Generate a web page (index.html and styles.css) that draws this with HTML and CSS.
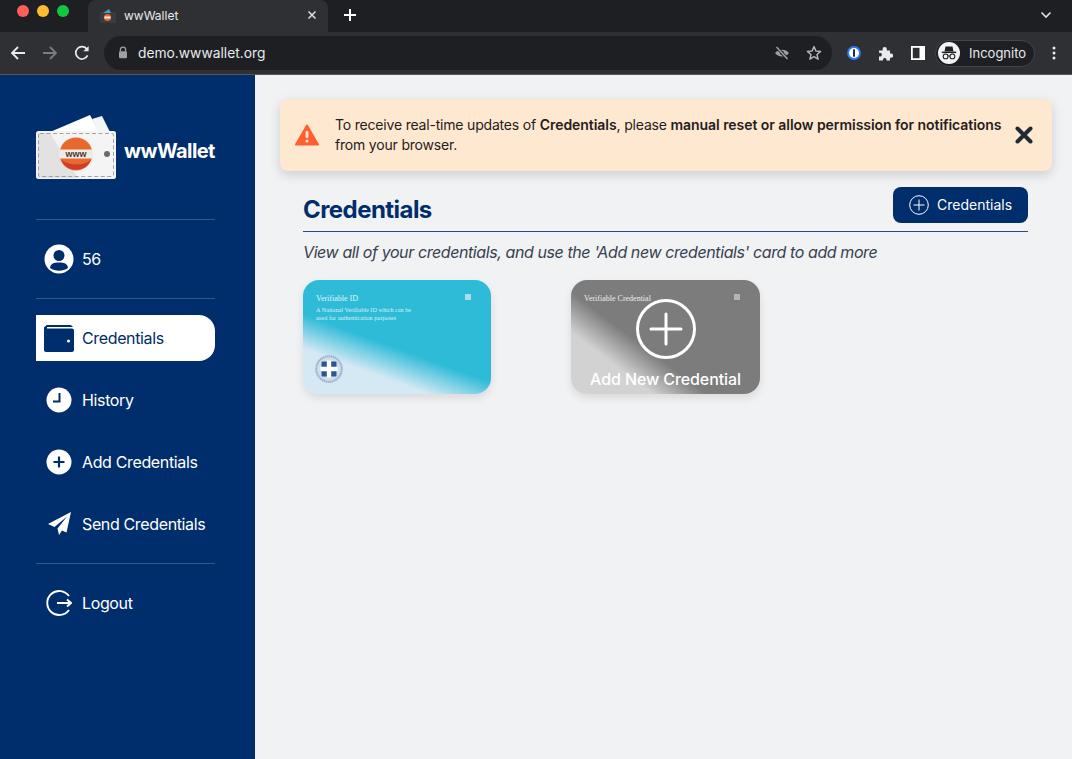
FILE: index.html
```html
<!DOCTYPE html>
<html lang="en">
<head>
    <meta charset="UTF-8">
    <meta name="viewport" content="width=device-width, initial-scale=1.0">
    <title>wwWallet</title>
    <link rel="stylesheet" href="styles.css">
</head>
<body>
    <div class="tabstrip">
        <div class="lights">
            <span class="light light-red"></span>
            <span class="light light-yellow"></span>
            <span class="light light-green"></span>
        </div>
        <div class="tab">
            <svg class="favicon" width="16" height="16" viewBox="0 0 16 16">
                <rect x="0" y="4" width="16" height="11" fill="#3a3b3f"/>
                <path d="M3 5 L9 1 L11 5 Z" fill="#3f9fc4"/>
                <circle cx="7.5" cy="9.5" r="3.6" fill="#e8642c"/>
                <rect x="4.5" y="8.5" width="6" height="2" fill="#f2f2f2"/>
            </svg>
            <span class="tab-title">wwWallet</span>
            <svg class="tab-close" width="10" height="10" viewBox="0 0 10 10">
                <path d="M1.5 1.5 L8.5 8.5 M8.5 1.5 L1.5 8.5" stroke="#dfe1e5" stroke-width="1.5"/>
            </svg>
        </div>
        <svg class="new-tab" width="14" height="14" viewBox="0 0 14 14">
            <path d="M7 1 V13 M1 7 H13" stroke="#fff" stroke-width="2"/>
        </svg>
        <svg class="tab-menu" width="12" height="8" viewBox="0 0 12 8">
            <path d="M1.5 1.5 L6 6 L10.5 1.5" fill="none" stroke="#dfe1e5" stroke-width="1.6"/>
        </svg>
    </div>

    <div class="toolbar">
        <svg class="nav-btn" width="16" height="16" viewBox="0 0 16 16">
            <path d="M15 8 H2 M8 2 L2 8 L8 14" fill="none" stroke="#e8eaed" stroke-width="1.8"/>
        </svg>
        <svg class="nav-btn" width="16" height="16" viewBox="0 0 16 16">
            <path d="M1 8 H14 M8 2 L14 8 L8 14" fill="none" stroke="#7b7c7f" stroke-width="1.8"/>
        </svg>
        <svg class="nav-btn" width="16" height="16" viewBox="0 0 16 16">
            <path d="M13.6 10.4 A6.2 6.2 0 1 1 13 4.2" fill="none" stroke="#e8eaed" stroke-width="1.7"/>
            <path d="M14.6 1 V6.2 H9.4 Z" fill="#e8eaed"/>
        </svg>
        <div class="urlbar">
            <svg class="lock" width="10" height="13" viewBox="0 0 10 13">
                <path d="M2.4 5.5 V3.8 A2.6 2.6 0 0 1 7.6 3.8 V5.5" fill="none" stroke="#9aa0a6" stroke-width="1.3"/>
                <rect x="1" y="5.2" width="8" height="7" rx="1.2" fill="#9aa0a6"/>
            </svg>
            <span class="url">demo.wwwallet.org</span>
            <svg class="url-icon" width="16" height="16" viewBox="0 0 16 16">
                <path d="M1 8 C4 3.5 12 3.5 15 8 C12 12.5 4 12.5 1 8 Z" fill="#9aa0a6"/>
                <circle cx="8" cy="8" r="2" fill="#202124"/>
                <path d="M2.5 2 L13.5 14" stroke="#202124" stroke-width="3.2"/>
                <path d="M2.5 2 L13.5 14" stroke="#9aa0a6" stroke-width="1.5"/>
            </svg>
            <svg class="url-icon" width="16" height="16" viewBox="0 0 16 16">
                <path d="M8 1.6 L9.9 6 L14.6 6.4 L11 9.5 L12.1 14.2 L8 11.7 L3.9 14.2 L5 9.5 L1.4 6.4 L6.1 6 Z" fill="none" stroke="#b5b7ba" stroke-width="1.4" stroke-linejoin="round"/>
            </svg>
        </div>
        <svg class="ext-one" width="14" height="14" viewBox="0 0 14 14">
            <circle cx="7" cy="7" r="6.9" fill="#2a7cf0"/>
            <circle cx="7" cy="7" r="5" fill="#fff"/>
            <rect x="6" y="3.2" width="2" height="7.6" rx="0.6" fill="#1b2a4a"/>
        </svg>
        <svg class="ext-puzzle" width="15" height="15" viewBox="0 0 15 15">
            <path d="M1 4.5 H4.6 V3 A2.1 2.1 0 0 1 8.8 3 V4.5 H12 V7.5 H13 A2.1 2.1 0 0 1 13 11.7 H12 V14.5 H8.5 V13.4 A1.8 1.8 0 0 0 5 13.4 V14.5 H1 V10.6 H2 A1.9 1.9 0 0 0 2 6.8 H1 Z" fill="#e8eaed"/>
        </svg>
        <svg class="ext-panel" width="14" height="14" viewBox="0 0 14 14">
            <rect width="14" height="14" fill="#fff"/>
            <rect x="1.8" y="1.8" width="6.7" height="10.4" fill="#2f3034"/>
        </svg>
        <div class="profile-pill">
            <svg class="incognito" width="22" height="22" viewBox="0 0 22 22">
                <circle cx="11" cy="11" r="11" fill="#f1f3f4"/>
                <path d="M7.5 4.5 H14.5 L15.5 9.5 H6.5 Z" fill="#202124"/>
                <rect x="3.8" y="9.6" width="14.4" height="1.5" fill="#202124"/>
                <circle cx="7.6" cy="14.4" r="2.4" fill="none" stroke="#202124" stroke-width="1.1"/>
                <circle cx="14.4" cy="14.4" r="2.4" fill="none" stroke="#202124" stroke-width="1.1"/>
                <path d="M10 14 H12" stroke="#202124" stroke-width="1.1"/>
            </svg>
            <span class="profile-name">Incognito</span>
        </div>
        <svg class="kebab" width="4" height="14" viewBox="0 0 4 14">
            <circle cx="2" cy="2" r="1.5" fill="#e8eaed"/>
            <circle cx="2" cy="7" r="1.5" fill="#e8eaed"/>
            <circle cx="2" cy="12" r="1.5" fill="#e8eaed"/>
        </svg>
    </div>

    <div class="app">
        <aside class="sidebar">
            <div class="brand">
                <svg class="brand-logo" width="80" height="66" viewBox="0 0 80 66">
                    <path d="M14 17 L54 0 L63 17 Z" fill="#fff"/>
                    <path d="M56 4 L66 1 L74 17 L62 17 Z" fill="#f3f6f8"/>
                    <rect x="0" y="16" width="80" height="48" rx="2.5" fill="#f4f4f4"/>
                    <path d="M2 18 H14 L42 63 H2 Z" fill="#e2e2e2"/>
                    <rect x="2.5" y="18.5" width="75" height="43" rx="1.5" fill="none" stroke="#8f8f8f" stroke-width="0.8" stroke-dasharray="4 2.5"/>
                    <circle cx="40" cy="39" r="16.5" fill="#e8692e"/>
                    <path d="M25 45 A16.5 16.5 0 0 0 55 45 C46 52 33 50 25 45 Z" fill="#cf3d27"/>
                    <rect x="23" y="34.5" width="34" height="9" rx="1" fill="#f0ebe6"/>
                    <text class="logo-text" x="40" y="42.2" text-anchor="middle">www</text>
                    <circle cx="71" cy="39" r="3" fill="#6a6a6a"/>
                </svg>
                <span class="brand-name">wwWallet</span>
            </div>
            <hr class="side-rule">
            <div class="side-item side-user">
                <svg class="user-icon" width="30" height="30" viewBox="0 0 30 30">
                    <circle cx="15" cy="15" r="14.5" fill="#fff"/>
                    <circle cx="15" cy="11.5" r="5.5" fill="#002d6b"/>
                    <path d="M6 24 C6.5 19.5 10 18.5 15 18.5 C20 18.5 23.5 19.5 24 24 C19 27.5 11 27.5 6 24 Z" fill="#002d6b"/>
                </svg>
                <span>56</span>
            </div>
            <hr class="side-rule">
            <nav class="side-nav">
                <a class="side-item side-active">
                    <svg class="wallet-icon" width="30" height="27" viewBox="0 0 30 27">
                        <path d="M2 1 C2 0.4 2.6 0 3.2 0 H26 C27.4 0 28.5 1 28.8 2 H3 V3.5 H28 C29 3.5 30 4.4 30 5.5 V25 C30 26.2 29 27 28 27 H2 C0.8 27 0 26.2 0 25 V3 C0 2 0.8 1 2 1 Z" fill="#002d6b"/>
                        <circle cx="24.5" cy="16" r="1.5" fill="#fff"/>
                    </svg>
                    <span>Credentials</span>
                </a>
                <a class="side-item">
                    <svg class="nav-icon" width="26" height="26" viewBox="0 0 26 26">
                        <circle cx="13" cy="13" r="12.5" fill="#fff"/>
                        <path d="M13.5 6 V14.5 H7" fill="none" stroke="#002d6b" stroke-width="2"/>
                    </svg>
                    <span>History</span>
                </a>
                <a class="side-item">
                    <svg class="nav-icon" width="26" height="26" viewBox="0 0 26 26">
                        <circle cx="13" cy="13" r="12.5" fill="#fff"/>
                        <path d="M13 7.5 V18.5 M7.5 13 H18.5" stroke="#002d6b" stroke-width="2.2"/>
                    </svg>
                    <span>Add Credentials</span>
                </a>
                <a class="side-item">
                    <svg class="nav-icon" width="26" height="24" viewBox="0 0 26 24">
                        <path d="M25 0 L2 12 L8.5 15 L21 4.5 L11.5 16.5 L13 23 L16 18.5 L20.5 20.5 Z" fill="#fff"/>
                    </svg>
                    <span>Send Credentials</span>
                </a>
            </nav>
            <hr class="side-rule">
            <a class="side-item side-logout">
                <svg class="nav-icon" width="26" height="26" viewBox="0 0 26 26">
                    <path d="M23 6 A12 12 0 1 0 23 20" fill="none" stroke="#fff" stroke-width="1.9"/>
                    <path d="M11 13 H25 M21 9.5 L25 13 L21 16.5" fill="none" stroke="#fff" stroke-width="1.9"/>
                </svg>
                <span>Logout</span>
            </a>
        </aside>

        <main class="content">
            <div class="alert">
                <svg class="alert-icon" width="24" height="22" viewBox="0 0 24 22">
                    <path d="M12 1.5 L23 20.5 H1 Z" fill="#ff5f2e" stroke="#ff5f2e" stroke-width="2" stroke-linejoin="round"/>
                    <rect x="10.6" y="7" width="2.8" height="7" rx="1" fill="#ffe8d0"/>
                    <circle cx="12" cy="17" r="1.6" fill="#ffe8d0"/>
                </svg>
                <p class="alert-text">To receive real-time updates of <b>Credentials</b>, please <b>manual reset or allow permission for notifications</b> from your browser.</p>
                <svg class="alert-close" width="18" height="18" viewBox="0 0 18 18">
                    <path d="M2.5 2.5 L15.5 15.5 M15.5 2.5 L2.5 15.5" stroke="#1f2937" stroke-width="4" stroke-linecap="round"/>
                </svg>
            </div>

            <div class="page">
                <div class="page-head">
                    <h1>Credentials</h1>
                    <button class="add-btn">
                        <svg width="20" height="20" viewBox="0 0 20 20">
                            <circle cx="10" cy="10" r="9.3" fill="none" stroke="#fff" stroke-width="1"/>
                            <path d="M10 4.5 V15.5 M4.5 10 H15.5" stroke="#fff" stroke-width="1"/>
                        </svg>
                        <span>Credentials</span>
                    </button>
                </div>
                <hr class="page-rule">
                <p class="page-sub">View all of your credentials, and use the 'Add new credentials' card to add more</p>

                <div class="cards">
                    <div class="card card-id">
                        <div class="card-top">
                            <div>
                                <div class="card-title">Verifiable ID</div>
                                <div class="card-desc">A National Verifiable ID which can be<br>used for authentication purposes</div>
                            </div>
                            <span class="card-qr"></span>
                        </div>
                        <svg class="emblem" width="28" height="28" viewBox="0 0 28 28">
                            <circle cx="14" cy="14" r="12.8" fill="#cfdeea" stroke="#9fb4cf" stroke-width="2.2" stroke-dasharray="1.5 0.5"/>
                            <rect x="6.5" y="6.5" width="15" height="15" rx="1" fill="#2a5599"/>
                            <path d="M14 5.5 V22.5 M5.5 14 H22.5" stroke="#fff" stroke-width="4.4"/>
                        </svg>
                    </div>
                    <div class="card card-new">
                        <div class="card-top">
                            <div class="card-title-new">Verifiable Credential</div>
                            <span class="card-qr card-qr-grey"></span>
                        </div>
                        <div class="card-overlay">
                            <svg width="60" height="60" viewBox="0 0 60 60">
                                <circle cx="30" cy="30" r="28.5" fill="none" stroke="#fff" stroke-width="3"/>
                                <path d="M30 15 V45 M15 30 H45" stroke="#fff" stroke-width="3" stroke-linecap="round"/>
                            </svg>
                            <span class="overlay-label">Add New Credential</span>
                        </div>
                    </div>
                </div>
            </div>
        </main>
    </div>
</body>
</html>
```

FILE: styles.css
```css
* {
    box-sizing: border-box;
}

body {
    margin: 0;
    height: 759px;
    overflow: hidden;
    font-family: Inter, "Liberation Sans", sans-serif;
    background-color: #f1f2f4;
    display: flex;
    flex-direction: column;
}

svg {
    display: block;
    flex-shrink: 0;
}

/* browser chrome */
.tabstrip {
    height: 32px;
    background-color: #1e1f22;
    display: flex;
    align-items: center;
    padding-left: 17px;
}

.lights {
    display: flex;
    gap: 8px;
    width: 71px;
    margin-bottom: 10px;
}

.light {
    width: 12px;
    height: 12px;
    border-radius: 50%;
}

.light-red { background-color: #fe5f57; }
.light-yellow { background-color: #febc2e; }
.light-green { background-color: #12c73f; }

.tab {
    width: 240px;
    height: 32px;
    background-color: #2f3034;
    border-radius: 8px 8px 0 0;
    display: flex;
    align-items: center;
    padding: 0 11px 2px 12px;
}

.favicon {
    margin-right: 8px;
    margin-top: 1px;
}

.tab-title {
    flex: 1;
    color: #e8eaed;
    font-size: 12px;
}

.new-tab {
    margin-left: 15px;
    margin-bottom: 2px;
}

.tab-menu {
    margin-left: auto;
    margin-right: 20px;
    margin-bottom: 2px;
}

.toolbar {
    height: 43px;
    background-color: #2f3034;
    border-bottom: 1px solid #55565a;
    display: flex;
    align-items: center;
    padding: 0 0 0 10px;
}

.nav-btn {
    margin-right: 16px;
}

.urlbar {
    width: 728px;
    height: 34px;
    margin-left: -2px;
    border-radius: 17px;
    background-color: #1e1f22;
    display: flex;
    align-items: center;
    padding: 0 10px 1px 14px;
}

.url {
    flex: 1;
    margin-left: 10px;
    color: #e8eaed;
    font-size: 13.8px;
}

.url-icon {
    margin-left: 16px;
}

.ext-one {
    margin-left: 15px;
}

.ext-puzzle {
    margin-left: 17px;
}

.ext-panel {
    margin-left: 18px;
}

.profile-pill {
    width: 100px;
    height: 27px;
    margin-left: 10px;
    border-radius: 14px;
    background-color: #1e1f22;
    border: 1px solid #45464a;
    display: flex;
    align-items: center;
    padding-left: 2px;
}

.profile-name {
    margin-left: 9px;
    color: #e8eaed;
    font-size: 13px;
}

.kebab {
    margin-left: 17px;
}

/* app */
.app {
    flex: 1;
    display: flex;
    min-height: 0;
}

.sidebar {
    width: 255px;
    background-color: #002d6b;
    padding: 40px 40px 0 36px;
    display: flex;
    flex-direction: column;
}

.brand {
    display: flex;
    align-items: center;
    gap: 8px;
    height: 66px;
}

.brand-name {
    margin-top: 6px;
    color: #fff;
    font-size: 20px;
    font-weight: 700;
    letter-spacing: -0.55px;
    white-space: nowrap;
}

.logo-text {
    font-family: "Liberation Sans", sans-serif;
    font-size: 9px;
    font-weight: 700;
    fill: #4a3a34;
}

.side-rule {
    width: 100%;
    height: 1px;
    margin: 0;
    border: 0;
    background-color: #35578c;
}

.brand + .side-rule {
    margin-top: 38px;
}

.side-nav {
    display: flex;
    flex-direction: column;
    gap: 16px;
    padding: 16px 0;
}

.side-item {
    height: 46px;
    display: flex;
    align-items: center;
    gap: 10px;
    color: #fff;
    font-size: 16px;
    letter-spacing: -0.36px;
    padding-left: 10px;
}

.side-user {
    height: 78px;
    padding-left: 8px;
    gap: 8px;
}

.side-active {
    background-color: #fff;
    color: #002d6b;
    border-radius: 0 16px 16px 0;
    padding-left: 8px;
    gap: 8px;
}

.side-logout {
    margin-top: 16px;
}

/* main */
.content {
    flex: 1;
    min-width: 0;
    padding: 24px 20px 0 25px;
}

.alert {
    height: 72px;
    background-color: #ffe8d0;
    border-radius: 8px;
    box-shadow: 0 4px 12px rgba(0, 0, 0, 0.15);
    display: flex;
    align-items: center;
    padding: 0 19px 0 15px;
}

.alert-text {
    flex: 1;
    margin: 0 0 0 16px;
    color: #1f2020;
    font-size: 14px;
    line-height: 20px;
    letter-spacing: -0.19px;
}

.alert-text b {
    font-weight: 600;
    letter-spacing: -0.05px;
}

.page {
    padding: 16px 24px 0 23px;
}

.page-head {
    height: 36px;
    display: flex;
    align-items: center;
    justify-content: space-between;
}

h1 {
    margin: 8px 0 0;
    color: #002d6b;
    font-size: 24px;
    font-weight: 700;
    letter-spacing: -0.55px;
}

.add-btn {
    width: 135px;
    height: 36px;
    border: 0;
    border-radius: 8px;
    background-color: #002d6b;
    color: #fff;
    font-family: inherit;
    font-size: 14px;
    font-weight: 400;
    display: flex;
    align-items: center;
    gap: 8px;
    padding: 0 0 1px 16px;
}

.page-rule {
    height: 1px;
    margin: 8px 0 0;
    border: 0;
    background-color: #2a4d80;
}

.page-sub {
    margin: 10px 0 0;
    color: #374151;
    font-size: 16px;
    line-height: 20px;
    font-style: italic;
    letter-spacing: -0.41px;
}

.cards {
    display: flex;
    gap: 80px;
    margin-top: 18px;
}

.card {
    position: relative;
    width: 188px;
    height: 114px;
    border-radius: 16px;
    box-shadow: 0 4px 8px rgba(0, 0, 0, 0.1);
    padding: 14px 20px 0 13px;
    overflow: hidden;
    font-family: "Liberation Serif", serif;
}

.card-id {
    background: linear-gradient(200deg, #2ebbd8 0%, #2ebbd8 56%, #d4e9f3 75%, #d4e9f3 100%);
}

.card-new {
    width: 189px;
    background: linear-gradient(217deg, #7c7c7c 0%, #7c7c7c 60%, #d2d2d2 76%, #d2d2d2 100%);
}

.card-top {
    display: flex;
    justify-content: space-between;
    align-items: flex-start;
}

.card-title {
    color: #e4f4f8;
    font-size: 8px;
}

.card-title-new {
    color: #eeeeee;
    font-size: 8px;
}

.card-desc {
    margin-top: 3px;
    color: #d8f0f6;
    font-size: 6.2px;
    line-height: 7.5px;
}

.card-qr {
    width: 6px;
    height: 6px;
    background-color: #a9dde9;
}

.card-qr-grey {
    background-color: #b5b5b5;
}

.emblem {
    position: absolute;
    left: 12px;
    bottom: 11px;
}

.card-overlay {
    position: absolute;
    inset: 0;
    display: flex;
    flex-direction: column;
    align-items: center;
    padding-top: 19px;
    gap: 10px;
}

.overlay-label {
    color: #fff;
    font-family: Inter, "Liberation Sans", sans-serif;
    font-size: 16px;
    font-weight: 500;
    letter-spacing: -0.1px;
    line-height: 20px;
}
```
